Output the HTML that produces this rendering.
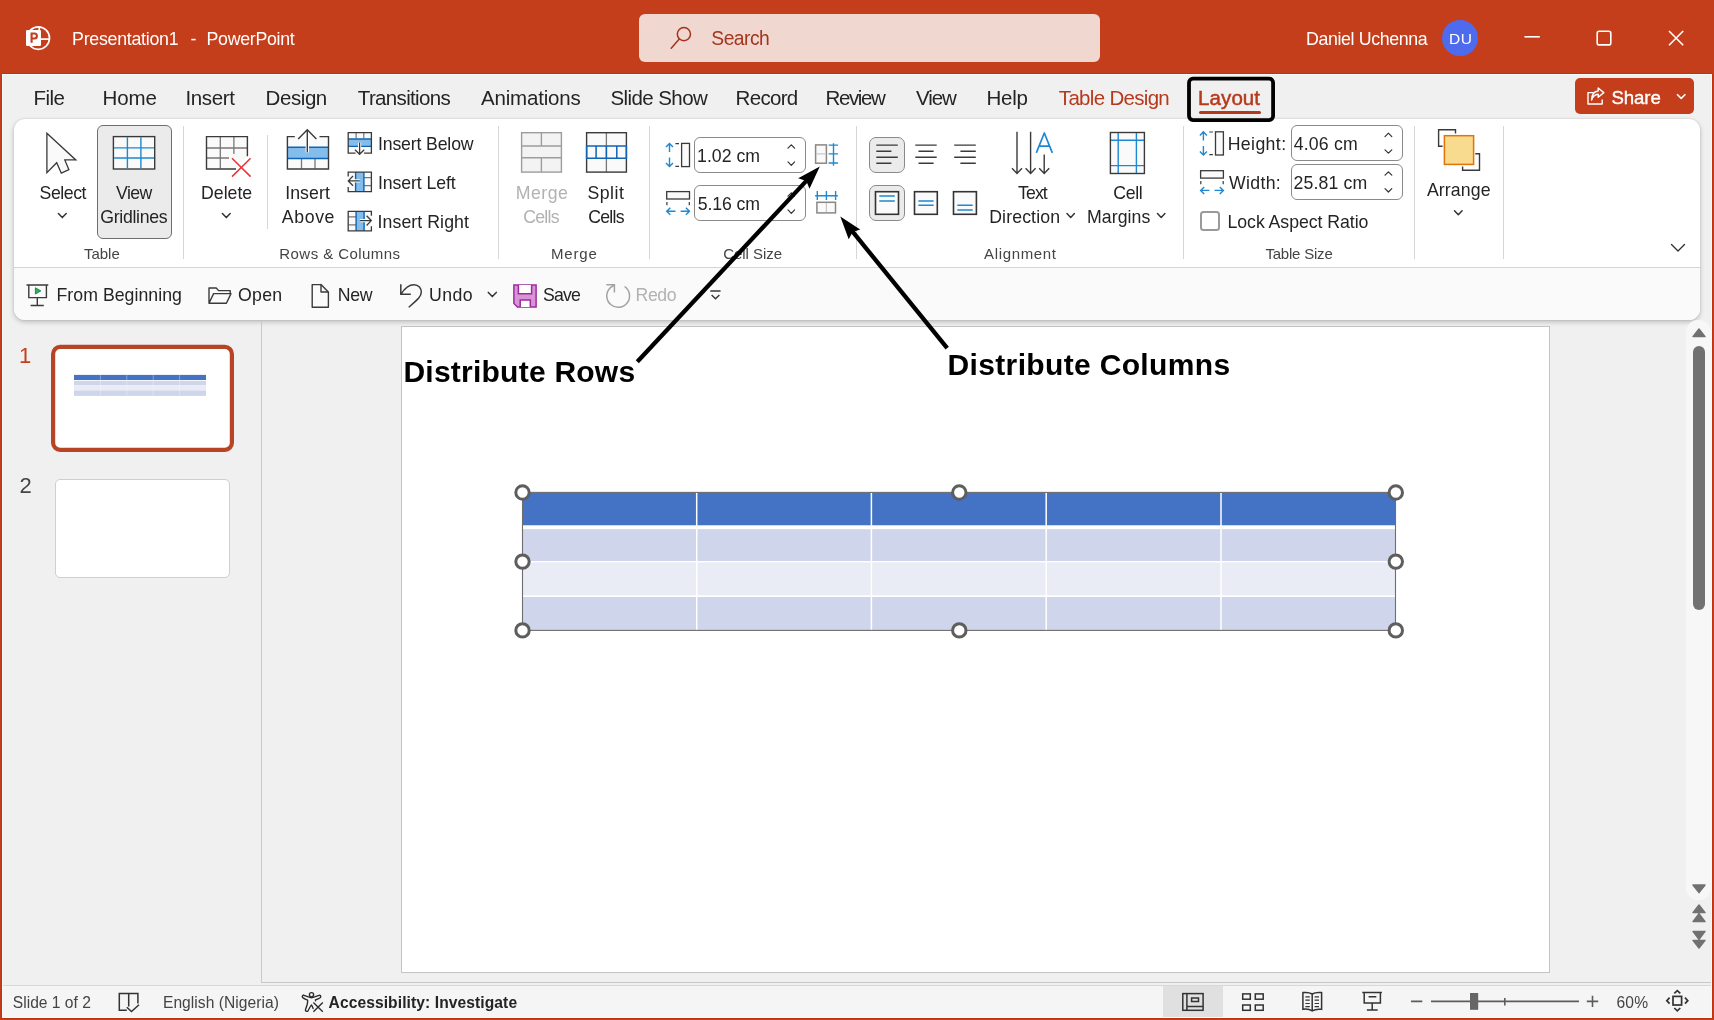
<!DOCTYPE html>
<html><head><meta charset="utf-8"><title>PowerPoint</title>
<style>
html,body{margin:0;padding:0;}
body{width:1714px;height:1020px;position:relative;overflow:hidden;background:#F0F0F0;font-family:"Liberation Sans",sans-serif;}
.a{position:absolute;}
.t{position:absolute;white-space:pre;line-height:1;font-family:"Liberation Sans",sans-serif;}
#titlebar{left:0;top:0;width:1714px;height:74px;background:#C43E1C;}
#bl{left:0;top:0;width:2px;height:1020px;background:#C43E1C;}
#br{left:1712px;top:0;width:2px;height:1020px;background:#C43E1C;}
#bb{left:0;top:1018px;width:1714px;height:2px;background:#C43E1C;}
.halo{position:absolute;background:#F8FEFE;}
.dk{position:absolute;background:#C0320F;}
#search{left:639px;top:14px;width:461px;height:48px;background:#F0D8D1;border-radius:6px;}
#avatar{left:1442px;top:20px;width:36px;height:36px;border-radius:50%;background:#4F6BED;}
#ribbon{left:14px;top:119px;width:1686px;height:201px;background:#fff;border-radius:11px;box-shadow:0 2px 5px rgba(0,0,0,0.22),0 0 2px rgba(0,0,0,0.12);overflow:hidden;}
#qat{left:0;top:148px;width:1686px;height:53px;background:#FAFAFA;border-top:1px solid #d4d4d4;}
.sep{position:absolute;width:1px;background:#d6d6d6;}
#layoutbox{left:1187px;top:76.8px;width:80.4px;height:37.6px;border:3.8px solid #000;border-radius:6px;}
#layoutul{left:1199px;top:111px;width:62px;height:3px;background:#B7391B;border-radius:1.5px;}
#share{left:1575px;top:78px;width:118.5px;height:36px;background:#C43E1C;border-radius:5px;}
#vg{left:97px;top:125px;width:73px;height:112px;background:#EBEBEB;border:1px solid #6e6e6e;border-radius:6px;}
.spin{position:absolute;background:#fff;border:1px solid #8a8a8a;border-radius:6px;box-sizing:border-box;}
.abtn{position:absolute;background:#EBEBEB;border:1px solid #8a8a8a;border-radius:7px;box-sizing:border-box;}
#chk{left:1200px;top:211px;width:20px;height:20px;box-sizing:border-box;border:2px solid #9a9a9a;border-radius:3.5px;background:#fff;}
#pdiv{left:261px;top:321px;width:1px;height:662px;background:#c8c8c8;}
#th1{left:51.5px;top:345.5px;width:176px;height:99px;border:3.5px solid #C0432A;border-radius:9px;background:#fff;}
#th2{left:55px;top:479px;width:172.5px;height:97px;border:1px solid #cfcfcf;border-radius:5px;background:#fff;}
#slide{left:401px;top:326px;width:1147px;height:645px;background:#fff;border:1px solid #c4c4c4;box-sizing:content-box;}
#hl1{left:262px;top:982px;width:1449px;height:1px;background:#c8c8c8;}
#hl2{left:2px;top:985px;width:1709px;height:1px;background:#d8d8d8;}
#status{left:2px;top:986px;width:1709px;height:31px;background:#F5F5F5;}
#nvbtn{left:1163px;top:986px;width:60px;height:31px;background:#E0E0E0;}
#strack{left:1686px;top:320px;width:25px;height:580px;background:#F7F7F7;border-radius:12px;}
#sthumb{left:1693px;top:346px;width:12px;height:264px;background:#717171;border-radius:6px;}
</style></head><body>
<div class="a" id="titlebar"></div>
<div class="a" id="search"></div>
<div class="a" id="avatar"></div>
<div class="a" id="layoutul"></div>
<div class="a" id="share"></div>
<div class="a" id="ribbon"><div class="a" id="qat"></div></div>
<div class="sep" style="left:183px;top:126px;height:133px"></div>
<div class="sep" style="left:267px;top:135px;height:94px"></div>
<div class="sep" style="left:498px;top:126px;height:133px"></div>
<div class="sep" style="left:649px;top:126px;height:133px"></div>
<div class="sep" style="left:856px;top:126px;height:133px"></div>
<div class="sep" style="left:1183px;top:126px;height:133px"></div>
<div class="sep" style="left:1414px;top:126px;height:133px"></div>
<div class="sep" style="left:1503px;top:126px;height:133px"></div>
<div class="a" id="vg"></div>
<div class="spin" style="left:694px;top:137px;width:112px;height:36px"></div>
<div class="spin" style="left:694px;top:185px;width:112px;height:36px"></div>
<div class="spin" style="left:1291px;top:125px;width:112px;height:36px"></div>
<div class="spin" style="left:1291px;top:164px;width:112px;height:36px"></div>
<div class="abtn" style="left:869px;top:137px;width:36px;height:36px"></div>
<div class="abtn" style="left:869px;top:185px;width:36px;height:36px"></div>
<div class="a" id="chk"></div>
<div class="a" id="pdiv"></div>
<div class="a" id="th2"></div>
<div class="a" id="slide"></div>
<div class="a" id="strack"></div>
<div class="a" id="sthumb"></div>
<div class="a" id="hl1"></div>
<div class="a" id="hl2"></div>
<div class="a" id="status"></div>
<div class="a" id="nvbtn"></div>
<div class="halo" style="left:2px;top:74px;width:1px;height:944px"></div>
<div class="halo" style="left:1711px;top:74px;width:1px;height:944px"></div>
<div class="halo" style="left:2px;top:74px;width:1710px;height:1px"></div>
<div class="halo" style="left:2px;top:1017px;width:1710px;height:1px"></div>
<div class="a" id="bl"></div>
<div class="a" id="br"></div>
<div class="a" id="bb"></div>
<div class="dk" style="left:1px;top:74px;width:1px;height:944px"></div>
<div class="dk" style="left:1712px;top:74px;width:1px;height:944px"></div>
<div class="dk" style="left:2px;top:73px;width:1710px;height:1px"></div>
<div class="dk" style="left:2px;top:1018px;width:1710px;height:1px"></div>
<svg class="a" style="left:0;top:0" width="1714" height="1020" viewBox="0 0 1714 1020" fill="none">
<!-- slide table -->
<g>
<rect x="522.5" y="492.7" width="873" height="33" fill="#4472C4"/>
<rect x="522.5" y="525.4" width="873" height="4" fill="#fff"/>
<rect x="522.5" y="529.2" width="873" height="32" fill="#CFD5EA"/>
<rect x="522.5" y="561" width="873" height="1.5" fill="#fff"/>
<rect x="522.5" y="562.4" width="873" height="33.2" fill="#E9EBF5"/>
<rect x="522.5" y="595.5" width="873" height="1.5" fill="#fff"/>
<rect x="522.5" y="597" width="873" height="33.3" fill="#CFD5EA"/>
<path d="M696.7 493 V630 M871.4 493 V630 M1046.2 493 V630 M1221 493 V630" stroke="#fff" stroke-width="1.5"/>
<rect x="522.5" y="492.4" width="873" height="138" stroke="#6e6e6e" stroke-width="1.1"/>
<g fill="#fff" stroke="#5e5e5e" stroke-width="3">
<circle cx="522.5" cy="492.5" r="6.7"/><circle cx="959.3" cy="492.5" r="6.7"/><circle cx="1395.8" cy="492.5" r="6.7"/>
<circle cx="522.5" cy="561.6" r="6.7"/><circle cx="1395.8" cy="561.6" r="6.7"/>
<circle cx="522.5" cy="630.4" r="6.7"/><circle cx="959.3" cy="630.4" r="6.7"/><circle cx="1395.8" cy="630.4" r="6.7"/>
</g>
</g>
<!-- thumbnail -->
<rect x="53.1" y="346.9" width="178.8" height="102.9" rx="7" fill="#fff" stroke="#B84426" stroke-width="4.2"/>
<!-- thumbnail table -->
<g>
<rect x="74" y="374.9" width="132" height="5.1" fill="#4472C4"/>
<rect x="74" y="380.8" width="132" height="4.4" fill="#CFD5EA"/>
<rect x="74" y="385.2" width="132" height="5.2" fill="#E9EBF5"/>
<rect x="74" y="390.4" width="132" height="5.5" fill="#CFD5EA"/>
<path d="M100.4 374.9 V395.9 M126.8 374.9 V395.9 M153.2 374.9 V395.9 M179.6 374.9 V395.9" stroke="#fff" stroke-width="0.5" opacity="0.7"/>
</g>
<!-- PowerPoint logo -->
<g stroke="#fff" stroke-width="1.7">
<circle cx="38.3" cy="38.1" r="11.2"/>
<line x1="39.2" y1="27" x2="39.2" y2="31"/>
<line x1="40" y1="39.1" x2="49.5" y2="39.1"/>
</g>
<rect x="26" y="30" width="15" height="16" rx="1.2" fill="#fff"/>
<path d="M31.6 42.7 V33.5 H34.4 a2.5 2.5 0 0 1 0 5 H31.6" stroke="#C43E1C" stroke-width="2.1"/>
<!-- search icon -->
<g stroke="#A3331C" stroke-width="1.5" stroke-linecap="round">
<circle cx="683.9" cy="34.1" r="6.6"/>
<line x1="679.3" y1="39" x2="671.2" y2="48.2"/>
</g>
<!-- window controls -->
<g stroke="#fff" stroke-width="1.6">
<line x1="1524.4" y1="36.8" x2="1539.8" y2="36.8"/>
<rect x="1597.2" y="31.3" width="13.6" height="13.6" rx="2"/>
<path d="M1669 31 L1683.2 45.2 M1683.2 31 L1669 45.2"/>
</g>
<!-- share icon + chevron -->
<g stroke="#fff" stroke-width="1.4" stroke-linejoin="round">
<path d="M1593.5 92.6 H1588 V104 H1602.2 V99.6"/>
<path d="M1591.6 100 C1591.8 94.5 1594.5 91.2 1598.2 91 V88 L1603.8 92.6 L1598.2 97.2 V94.2 C1595 94.3 1592.8 96 1591.6 100 Z"/>
<path d="M1677 94.3 L1681.2 98.4 L1685.4 94.3" stroke-width="1.6"/>
</g>
<!-- Select cursor -->
<path d="M46.9 133.3 V172.6 L56.7 162.7 L61.3 173.2 L68.9 169.7 L64.8 159.9 H75.8 Z" fill="#fafafa" stroke="#3a3a3a" stroke-width="1.3" stroke-linejoin="miter"/>
<!-- chevrons -->
<g stroke="#333" stroke-width="1.5" stroke-linecap="round" stroke-linejoin="round">
<path d="M58.4 213.6 L62.3 217.6 L66.2 213.6"/>
<path d="M222.4 213.6 L226.3 217.6 L230.2 213.6"/>
<path d="M1067 213.6 L1070.7 217.5 L1074.4 213.6"/>
<path d="M1157.5 213.6 L1161.2 217.5 L1164.9 213.6"/>
<path d="M1454.5 210.8 L1458.3 214.8 L1462.1 210.8"/>
<path d="M488.3 292.4 L492.3 296.6 L496.3 292.4"/>
<path d="M1671.5 244.5 L1678 251 L1684.5 244.5" stroke-width="1.4"/>
</g>
<!-- spinner chevrons -->
<g stroke="#333" stroke-width="1.2" stroke-linecap="round" stroke-linejoin="round">
<path d="M788 148.2 L791.3 144.8 L794.6 148.2"/>
<path d="M788 161.9 L791.3 165.3 L794.6 161.9"/>
<path d="M788 196.2 L791.3 192.8 L794.6 196.2"/>
<path d="M788 209.9 L791.3 213.3 L794.6 209.9"/>
<path d="M1385 136.6 L1388.4 133.2 L1391.8 136.6"/>
<path d="M1385 149.8 L1388.4 153.2 L1391.8 149.8"/>
<path d="M1385 175.2 L1388.4 171.8 L1391.8 175.2"/>
<path d="M1385 188.6 L1388.4 192 L1391.8 188.6"/>
</g>
<!-- View Gridlines icon -->
<rect x="113.4" y="136.6" width="41.3" height="32.4" fill="#fafafa" stroke="#3a3a3a" stroke-width="1.4"/>
<path d="M127.4 137.3 V168.3 M140.9 137.3 V168.3 M114.1 147.9 H154 M114.1 158 H154" stroke="#1E88D2" stroke-width="1.4"/>
<!-- Delete icon -->
<path d="M206.5 136.6 H247.4 V156 L236 169 H206.5 Z" fill="#fafafa"/>
<path d="M220.3 137 V168.6 M233.9 137 V154 M207 148 H247 M207 158 H229" stroke="#797775" stroke-width="1.3"/>
<path d="M247.4 156.2 V136.6 H206.5 V169 H236" stroke="#3a3a3a" stroke-width="1.4"/>
<path d="M232 158.2 L250.6 176.6 M250.6 158.2 L232 176.6" stroke="#E8353B" stroke-width="1.5"/>
<!-- Insert Above icon -->
<rect x="287.4" y="136.6" width="41.1" height="32.4" fill="#fafafa"/>
<rect x="287.4" y="147.2" width="41.1" height="11.4" fill="#83BDEB"/>
<path d="M301.5 159 V168.6 M315 159 V168.6" stroke="#797775" stroke-width="1.3"/>
<path d="M287.4 147.3 H328.5 M287.4 158.6 H328.5" stroke="#0F64B4" stroke-width="1.5"/>
<path d="M294.8 136.6 H287.4 V169 H328.5 V136.6 H319.5" stroke="#3a3a3a" stroke-width="1.4"/>
<path d="M307.3 152.4 V130" stroke="#fff" stroke-width="3.4"/>
<path d="M307.3 152.2 V129.9 M298.2 139 L307.3 129.8 L316.4 139" stroke="#3a3a3a" stroke-width="1.4"/>
<!-- Insert Below small -->
<rect x="348.2" y="132.7" width="23.2" height="20.4" fill="#fafafa"/>
<rect x="348.2" y="139" width="23.2" height="7.4" fill="#83BDEB"/>
<path d="M356.1 133 V138.6 M363.8 133 V138.6" stroke="#797775" stroke-width="1.2"/>
<path d="M348.2 139 H371.4 M348.2 146.4 H371.4" stroke="#0F64B4" stroke-width="1.4"/>
<path d="M355.5 153.1 H348.2 V132.7 H371.4 V153.1 H364" stroke="#3a3a3a" stroke-width="1.3"/>
<path d="M359.6 142.5 V154" stroke="#fff" stroke-width="3.2"/>
<path d="M359.6 142.6 V154.2 M355 149.8 L359.6 154.3 L364.2 149.8" stroke="#3a3a3a" stroke-width="1.3"/>
<!-- Insert Left small -->
<rect x="348.2" y="172.1" width="23.2" height="19.6" fill="#fafafa"/>
<rect x="355.6" y="172.1" width="8.3" height="19.6" fill="#83BDEB"/>
<path d="M364 177.6 H371 M364 185.6 H371" stroke="#797775" stroke-width="1.2"/>
<path d="M355.6 172.1 V191.7 M363.9 172.1 V191.7" stroke="#0F64B4" stroke-width="1.4"/>
<path d="M348.2 176.6 V172.1 H371.4 V191.7 H348.2 V187" stroke="#3a3a3a" stroke-width="1.3"/>
<path d="M348.6 180.9 H359.8" stroke="#fff" stroke-width="3.2"/>
<path d="M348.4 180.9 H359.8 M353 176 L348.3 180.9 L353 185.8" stroke="#3a3a3a" stroke-width="1.3"/>
<!-- Insert Right small -->
<rect x="348.2" y="211.3" width="23.2" height="19.6" fill="#fafafa"/>
<rect x="356.1" y="211.3" width="8" height="19.6" fill="#83BDEB"/>
<path d="M348.6 216.8 H356 M348.6 224.8 H356" stroke="#797775" stroke-width="1.2"/>
<path d="M356.1 211.3 V230.9 M364.1 211.3 V230.9" stroke="#0F64B4" stroke-width="1.4"/>
<path d="M371.4 215.8 V211.3 H348.2 V230.9 H371.4 V226.3" stroke="#3a3a3a" stroke-width="1.3"/>
<path d="M359.8 220.6 H371" stroke="#fff" stroke-width="3.2"/>
<path d="M359.8 220.6 H371.2 M366.6 215.7 L371.3 220.6 L366.6 225.5" stroke="#3a3a3a" stroke-width="1.3"/>
<!-- Merge cells (disabled) -->
<rect x="521.6" y="132.7" width="39.8" height="39.4" fill="#f3f3f3" stroke="#9d9d9d" stroke-width="1.4"/>
<path d="M521.6 146 H561.4 M521.6 157.8 H561.4 M541.4 132.7 V146 M541.4 157.8 V172.1" stroke="#9d9d9d" stroke-width="1.4"/>
<!-- Split cells -->
<rect x="586.6" y="132.7" width="39.8" height="39.4" fill="#fafafa"/>
<path d="M606.4 133 V172" stroke="#797775" stroke-width="1.3"/>
<rect x="586.6" y="132.7" width="39.8" height="39.4" stroke="#3a3a3a" stroke-width="1.4"/>
<path d="M586.6 146.1 H626.4 V158.2 H586.6 Z M596.1 146.1 V158.2 M606.4 146.1 V158.2 M616.8 146.1 V158.2" stroke="#0F64B4" stroke-width="1.5"/>
<!-- Cell height icon -->
<g>
<rect x="681.6" y="143.4" width="7.9" height="23.2" fill="#fafafa" stroke="#3a3a3a" stroke-width="1.3"/>
<path d="M675.4 143.6 H679 M675.4 166.3 H679" stroke="#3a3a3a" stroke-width="1.2"/>
<path d="M669.5 143.6 V152 M669.5 157.6 V166.4 M666 147 L669.5 143.4 L673 147 M666 163 L669.5 166.6 L673 163" stroke="#1E88D2" stroke-width="1.4"/>
</g>
<!-- Cell width icon -->
<g>
<rect x="666.7" y="191.6" width="22.8" height="7.4" fill="#fafafa" stroke="#3a3a3a" stroke-width="1.3"/>
<path d="M666.9 202 V205.2 M689.3 202 V205.2" stroke="#3a3a3a" stroke-width="1.2"/>
<path d="M666.8 211.3 H675.5 M680.6 211.3 H689.4 M670.3 207.8 L666.7 211.3 L670.3 214.8 M685.9 207.8 L689.5 211.3 L685.9 214.8" stroke="#1E88D2" stroke-width="1.4"/>
</g>
<g transform="translate(533.9,-11.6)">
<rect x="681.6" y="143.4" width="7.9" height="23.2" fill="#fafafa" stroke="#3a3a3a" stroke-width="1.3"/>
<path d="M675.4 143.6 H679 M675.4 166.3 H679" stroke="#3a3a3a" stroke-width="1.2"/>
<path d="M669.5 143.6 V152 M669.5 157.6 V166.4 M666 147 L669.5 143.4 L673 147 M666 163 L669.5 166.6 L673 163" stroke="#1E88D2" stroke-width="1.4"/>
</g>
<g transform="translate(533.9,-20.9)">
<rect x="666.7" y="191.6" width="22.8" height="7.4" fill="#fafafa" stroke="#3a3a3a" stroke-width="1.3"/>
<path d="M666.9 202 V205.2 M689.3 202 V205.2" stroke="#3a3a3a" stroke-width="1.2"/>
<path d="M666.8 211.3 H675.5 M680.6 211.3 H689.4 M670.3 207.8 L666.7 211.3 L670.3 214.8 M685.9 207.8 L689.5 211.3 L685.9 214.8" stroke="#1E88D2" stroke-width="1.4"/>
</g>
<!-- Distribute rows -->
<rect x="815.6" y="144.9" width="10.8" height="18.3" fill="#fafafa" stroke="#8a8886" stroke-width="1.5"/>
<path d="M816.4 153.9 H825.6" stroke="#c8c6c4" stroke-width="1.2"/>
<path d="M833.5 143.3 V165.8 M828.6 145.1 H838 M828.6 153.9 H838 M828.6 163 H838" stroke="#1E88D2" stroke-width="1.4"/>
<!-- Distribute cols -->
<rect x="816.9" y="202.3" width="18.6" height="10.6" fill="#fafafa" stroke="#8a8886" stroke-width="1.5"/>
<path d="M826.4 203 V212.2" stroke="#c8c6c4" stroke-width="1.2"/>
<path d="M815.1 195.7 H837.8 M817.3 191 V200 M826.4 191 V200 M835.6 191 V200" stroke="#1E88D2" stroke-width="1.4"/>
<!-- Align icons -->
<g stroke="#3a3a3a" stroke-width="1.4">
<path d="M876.3 145.1 H897.8 M876.3 151.2 H891.4 M876.3 157.2 H897.8 M876.3 163.3 H891.4"/>
<path d="M915.3 145.1 H936.7 M918.5 151.2 H933.6 M915.3 157.2 H936.7 M918.5 163.3 H933.6"/>
<path d="M954.2 145.1 H975.8 M960.4 151.2 H975.8 M954.2 157.2 H975.8 M960.4 163.3 H975.8"/>
</g>
<g stroke="#333" stroke-width="1.6" fill="#fafafa">
<rect x="875.5" y="191.7" width="23" height="22.6"/>
<rect x="914.5" y="191.7" width="22.8" height="22.6"/>
<rect x="953.5" y="191.7" width="22.9" height="22.6"/>
</g>
<path d="M879.3 196 H894.8 M879.3 201 H894.8 M918.4 201 H933.6 M918.4 205.3 H933.6 M957.3 205.2 H972.7 M957.3 209.9 H972.7" stroke="#1E88D2" stroke-width="1.5"/>
<!-- Text direction -->
<g stroke="#3a3a3a" stroke-width="1.4">
<path d="M1017 131.8 V173.3 M1012 168.3 L1017 173.4 L1022 168.3"/>
<path d="M1030.6 131.8 V173.3 M1025.6 168.3 L1030.6 173.4 L1035.6 168.3"/>
<path d="M1044.2 154.4 V173.3 M1039.2 168.3 L1044.2 173.4 L1049.2 168.3"/>
</g>
<path d="M1036.3 152.9 L1044.3 133 L1052.3 152.9 M1039 146.2 H1049.6" stroke="#1E88D2" stroke-width="1.7" stroke-linejoin="round"/>
<!-- Cell margins -->
<rect x="1110.4" y="132.5" width="34" height="41" fill="#fafafa"/>
<path d="M1118.2 133 V173 M1136.4 133 V173 M1111 140.2 H1144 M1111 165.6 H1144" stroke="#1E88D2" stroke-width="1.4"/>
<rect x="1110.4" y="132.5" width="34" height="41" stroke="#3a3a3a" stroke-width="1.4"/>
<!-- Arrange -->
<path d="M1455.5 133.4 V129.8 H1438.6 V146.2 H1442.6" stroke="#3a3a3a" stroke-width="1.4"/>
<path d="M1475.3 153.8 H1479.5 V170.2 H1462.6 V166.5" stroke="#3a3a3a" stroke-width="1.4"/>
<rect x="1444.4" y="135.7" width="29.2" height="28.7" fill="#F8DB8F" stroke="#E0730A" stroke-width="1.5"/>
<!-- QAT icons -->
<g stroke="#3a3a3a" stroke-width="1.4">
<path d="M26.5 285 H48.3 M28.8 285 V297.6 H46.4 V285 M37.3 297.6 V305.5 M30.6 305.5 H43.8"/>
<path d="M230.2 293.6 V290.6 H218.6 L216.2 288 H209 V303.2 L213.6 293.6 H231 L226.4 303.2 H209" stroke-linejoin="round"/>
<path d="M321 284.6 H312.2 V307.2 H328.4 V292 L321 284.6 V292 H328.4" stroke-linejoin="round"/>
<path d="M400.8 284.2 V294.2 H410.8 M400.9 294.1 C404.5 288.5 409 284.7 414 284.7 C418.8 284.7 421.3 288.4 421.3 292 C421.3 296.3 418.5 298.7 408.7 307.3" stroke-width="1.5"/>
<path d="M710.3 291 H720.6 M711.6 295 L715.5 298.7 L719.4 295" stroke-width="1.5"/>
</g>
<path d="M35.4 287.8 L40.8 290.9 L35.4 294 Z" fill="#3BAA64" stroke="#1C8E44" stroke-width="1" stroke-linejoin="round"/>
<!-- save -->
<path d="M513.9 284.9 H536.1 V307 H517.4 L513.9 303.5 Z" fill="#D993D9" stroke="#9B2D9B" stroke-width="1.5"/>
<path d="M518.4 284.9 V293.7 H531.6 V284.9 M520.2 307 V300 H530.3 V307" fill="#fff" stroke="#9B2D9B" stroke-width="1.5"/>
<!-- redo -->
<path d="M606.3 284.7 H614.4 V292.5 M624.6 286.5 A11.4 11.4 0 1 1 609.6 288.4 L614.2 284.9" stroke="#a3a3a3" stroke-width="1.5"/>
<!-- scrollbar arrows -->
<g fill="#717171" stroke="#717171" stroke-width="1.5" stroke-linejoin="round">
<path d="M1699 329 L1705 336.6 H1693 Z"/>
<path d="M1699 892.6 L1705 885 H1693 Z"/>
<path d="M1699 905 L1705 912.6 H1693 Z M1699 913.6 L1705 921.6 H1693 Z"/>
<path d="M1699 948 L1705 940.4 H1693 Z M1699 939.4 L1705 931.4 H1693 Z"/>
</g>
<!-- status icons -->
<g stroke="#333" stroke-width="1.5">
<path d="M128.7 1006.5 V993.6 M126.8 1010.2 H119.3 V993.6 H137.9 V1003.6 M126.8 1007.2 L131.5 1011.6 L139 1004.8"/>
<rect x="1182.8" y="993.6" width="20.3" height="16.7"/>
<path d="M1186.9 993.6 V1010.3 M1186.9 1006.4 H1203"/>
<rect x="1191.6" y="998" width="6.9" height="3.5"/>
<rect x="1242.7" y="993.9" width="7.6" height="5.3"/><rect x="1255.3" y="993.9" width="7.9" height="5.3"/>
<rect x="1242.7" y="1005" width="7.6" height="5.3"/><rect x="1255.3" y="1005" width="7.9" height="5.3"/>
<path d="M1312.2 994 V1010.8 M1312.2 994 C1309.5 992.4 1306 992.2 1302.9 992.6 V1009.3 C1306 1008.9 1309.5 1009.2 1312.2 1010.8 C1314.9 1009.2 1318.4 1008.9 1321.6 1009.3 V992.6 C1318.4 992.2 1314.9 992.4 1312.2 994"/>
<path d="M1305.4 996.9 H1309.8 M1305.4 1000.2 H1309.8 M1305.4 1003.5 H1309.8 M1305.4 1006.6 H1309.8 M1314.6 996.9 H1319 M1314.6 1000.2 H1319 M1314.6 1003.5 H1319 M1314.6 1006.6 H1319" stroke-width="1.2"/>
<path d="M1362.3 992.5 H1381.9 M1364.2 992.5 V1002.9 H1380.4 V992.5 M1368.6 996.7 H1376.3 M1372.2 1002.9 V1009.9 M1366.9 1009.9 H1377.7"/>
</g>
<!-- accessibility -->
<g stroke="#2b2b2b" stroke-width="1.35" stroke-linecap="round" stroke-linejoin="round">
<circle cx="311.5" cy="994.7" r="2.1"/>
<path d="M303.9 995.3 C302.6 994.9 301.8 996.3 302.5 997.3 C303 998.1 305 998.9 307.6 1000 C308 1003 306.5 1007 305.5 1009.4 C305 1011 306.6 1012 307.9 1011 C309 1009.5 310 1006.5 311.5 1004.9 C312.3 1005.8 312.7 1007.2 313.1 1008.5"/>
<path d="M303.9 995.3 C306 996.1 309 997.7 311.5 997.7 C314 997.7 317 996.1 319.1 995.3 C320.4 994.9 321.2 996.3 320.5 997.3 C320 998.1 318 998.9 315.4 999.9 L315.6 1000.8"/>
<path d="M313.4 1002.4 L322.8 1011.8 M322.8 1002.4 L313.4 1011.8" stroke-linecap="butt"/>
</g>
<!-- zoom controls -->
<g stroke="#5c5c5c" stroke-width="1.6">
<path d="M1411 1001.4 H1422.3 M1431 1001.4 H1579 M1504.8 998 V1005.6 M1586.8 1001.4 H1598.2 M1592.5 995.7 V1007.1"/>
</g>
<rect x="1470" y="993" width="8.2" height="16.8" fill="#666"/>
<g stroke="#333" stroke-width="1.7">
<rect x="1673" y="996.4" width="8.6" height="8.6"/>
<path d="M1674.3 993.4 L1677.3 990.6 L1680.3 993.4 M1674.3 1008 L1677.3 1010.8 L1680.3 1008 M1669.6 997.7 L1666.8 1000.7 L1669.6 1003.7 M1685 997.7 L1687.8 1000.7 L1685 1003.7"/>
</g>
</svg>
<div class="a" id="txt" style="left:0;top:0;width:1714px;height:1020px;will-change:transform;">
<span class="t" style="left:72.06px;top:31px;font-size:17.8px;color:#fff;font-weight:400;letter-spacing:-0.266px;">Presentation1</span>
<span class="t" style="left:190.44px;top:31px;font-size:17.8px;color:#fff;font-weight:400;letter-spacing:0.000px;">-</span>
<span class="t" style="left:206.51px;top:31px;font-size:17.8px;color:#fff;font-weight:400;letter-spacing:-0.302px;">PowerPoint</span>
<span class="t" style="left:711.30px;top:29px;font-size:19.3px;color:#A3361F;font-weight:400;letter-spacing:-0.517px;">Search</span>
<span class="t" style="left:1306.06px;top:31px;font-size:17.8px;color:#fff;font-weight:400;letter-spacing:-0.380px;">Daniel Uchenna</span>
<span class="t" style="left:1448.89px;top:31px;font-size:15.5px;color:#fff;font-weight:400;letter-spacing:0.765px;">DU</span>
<span class="t" style="left:33.50px;top:88px;font-size:20.5px;color:#242424;font-weight:400;letter-spacing:-0.527px;">File</span>
<span class="t" style="left:102.50px;top:88px;font-size:20.5px;color:#242424;font-weight:400;letter-spacing:-0.077px;">Home</span>
<span class="t" style="left:185.50px;top:88px;font-size:20.5px;color:#242424;font-weight:400;letter-spacing:-0.364px;">Insert</span>
<span class="t" style="left:265.50px;top:88px;font-size:20.5px;color:#242424;font-weight:400;letter-spacing:-0.408px;">Design</span>
<span class="t" style="left:357.78px;top:88px;font-size:20.5px;color:#242424;font-weight:400;letter-spacing:-0.652px;">Transitions</span>
<span class="t" style="left:481.10px;top:88px;font-size:20.5px;color:#242424;font-weight:400;letter-spacing:-0.205px;">Animations</span>
<span class="t" style="left:610.46px;top:88px;font-size:20.5px;color:#242424;font-weight:400;letter-spacing:-0.583px;">Slide Show</span>
<span class="t" style="left:735.50px;top:88px;font-size:20.5px;color:#242424;font-weight:400;letter-spacing:-0.662px;">Record</span>
<span class="t" style="left:825.50px;top:88px;font-size:20.5px;color:#242424;font-weight:400;letter-spacing:-1.369px;">Review</span>
<span class="t" style="left:916.10px;top:88px;font-size:20.5px;color:#242424;font-weight:400;letter-spacing:-1.131px;">View</span>
<span class="t" style="left:986.50px;top:88px;font-size:20.5px;color:#242424;font-weight:400;letter-spacing:-0.236px;">Help</span>
<span class="t" style="left:1058.83px;top:88px;font-size:20.5px;color:#B7391B;font-weight:400;letter-spacing:-0.688px;">Table Design</span>
<span class="t" style="left:1198.05px;top:88px;font-size:20.5px;color:#B7391B;font-weight:400;letter-spacing:0.092px;-webkit-text-stroke:0.5px #B7391B;">Layout</span>
<span class="t" style="left:1611.42px;top:89px;font-size:18.6px;color:#fff;font-weight:400;letter-spacing:-0.075px;-webkit-text-stroke:0.4px #fff;">Share</span>
<span class="t" style="left:39.60px;top:185px;font-size:17.7px;color:#242424;font-weight:400;letter-spacing:-0.464px;">Select</span>
<span class="t" style="left:116.05px;top:185px;font-size:17.7px;color:#242424;font-weight:400;letter-spacing:-0.600px;">View</span>
<span class="t" style="left:100.27px;top:209px;font-size:17.7px;color:#242424;font-weight:400;letter-spacing:-0.305px;">Gridlines</span>
<span class="t" style="left:201.12px;top:185px;font-size:17.7px;color:#242424;font-weight:400;letter-spacing:-0.013px;">Delete</span>
<span class="t" style="left:285.17px;top:185px;font-size:17.7px;color:#242424;font-weight:400;letter-spacing:0.103px;">Insert</span>
<span class="t" style="left:281.80px;top:209px;font-size:17.7px;color:#242424;font-weight:400;letter-spacing:0.622px;">Above</span>
<span class="t" style="left:377.97px;top:136px;font-size:17.7px;color:#242424;font-weight:400;letter-spacing:-0.155px;">Insert Below</span>
<span class="t" style="left:377.97px;top:175px;font-size:17.7px;color:#242424;font-weight:400;letter-spacing:-0.087px;">Insert Left</span>
<span class="t" style="left:377.62px;top:214px;font-size:17.7px;color:#242424;font-weight:400;letter-spacing:0.074px;">Insert Right</span>
<span class="t" style="left:515.72px;top:185px;font-size:17.7px;color:#b2b2b2;font-weight:400;letter-spacing:0.487px;">Merge</span>
<span class="t" style="left:523.17px;top:209px;font-size:17.7px;color:#b2b2b2;font-weight:400;letter-spacing:-0.740px;">Cells</span>
<span class="t" style="left:587.45px;top:185px;font-size:17.7px;color:#242424;font-weight:400;letter-spacing:0.490px;">Split</span>
<span class="t" style="left:588.17px;top:209px;font-size:17.7px;color:#242424;font-weight:400;letter-spacing:-0.740px;">Cells</span>
<span class="t" style="left:697.09px;top:148px;font-size:17.7px;color:#242424;font-weight:400;letter-spacing:0.000px;">1.02 cm</span>
<span class="t" style="left:697.65px;top:196px;font-size:17.7px;color:#242424;font-weight:400;letter-spacing:-0.092px;">5.16 cm</span>
<span class="t" style="left:1018.07px;top:185px;font-size:17.7px;color:#242424;font-weight:400;letter-spacing:-0.908px;">Text</span>
<span class="t" style="left:989.17px;top:209px;font-size:17.7px;color:#242424;font-weight:400;letter-spacing:0.137px;">Direction</span>
<span class="t" style="left:1113.22px;top:185px;font-size:17.7px;color:#242424;font-weight:400;letter-spacing:-0.345px;">Cell</span>
<span class="t" style="left:1086.97px;top:209px;font-size:17.7px;color:#242424;font-weight:400;letter-spacing:0.084px;">Margins</span>
<span class="t" style="left:1227.67px;top:136px;font-size:17.7px;color:#242424;font-weight:400;letter-spacing:0.393px;">Height:</span>
<span class="t" style="left:1229.10px;top:175px;font-size:17.7px;color:#242424;font-weight:400;letter-spacing:0.291px;">Width:</span>
<span class="t" style="left:1293.72px;top:136px;font-size:17.7px;color:#242424;font-weight:400;letter-spacing:0.189px;">4.06 cm</span>
<span class="t" style="left:1293.57px;top:175px;font-size:17.7px;color:#242424;font-weight:400;letter-spacing:0.132px;">25.81 cm</span>
<span class="t" style="left:1227.52px;top:214px;font-size:17.7px;color:#242424;font-weight:400;letter-spacing:-0.042px;">Lock Aspect Ratio</span>
<span class="t" style="left:1426.90px;top:182px;font-size:17.7px;color:#242424;font-weight:400;letter-spacing:0.121px;">Arrange</span>
<span class="t" style="left:83.97px;top:246px;font-size:15px;color:#444444;font-weight:400;letter-spacing:-0.019px;">Table</span>
<span class="t" style="left:279.33px;top:246px;font-size:15px;color:#444444;font-weight:400;letter-spacing:0.431px;">Rows &amp; Columns</span>
<span class="t" style="left:550.93px;top:246px;font-size:15px;color:#444444;font-weight:400;letter-spacing:0.821px;">Merge</span>
<span class="t" style="left:723.15px;top:246px;font-size:15px;color:#444444;font-weight:400;letter-spacing:-0.044px;">Cell Size</span>
<span class="t" style="left:984.00px;top:246px;font-size:15px;color:#444444;font-weight:400;letter-spacing:0.656px;">Alignment</span>
<span class="t" style="left:1265.42px;top:246px;font-size:15px;color:#444444;font-weight:400;letter-spacing:-0.209px;">Table Size</span>
<span class="t" style="left:56.52px;top:287px;font-size:17.7px;color:#242424;font-weight:400;letter-spacing:0.039px;">From Beginning</span>
<span class="t" style="left:237.92px;top:287px;font-size:17.7px;color:#242424;font-weight:400;letter-spacing:0.341px;">Open</span>
<span class="t" style="left:337.87px;top:287px;font-size:17.7px;color:#242424;font-weight:400;letter-spacing:-0.371px;">New</span>
<span class="t" style="left:428.89px;top:287px;font-size:17.7px;color:#242424;font-weight:400;letter-spacing:0.503px;">Undo</span>
<span class="t" style="left:543.10px;top:287px;font-size:17.7px;color:#242424;font-weight:400;letter-spacing:-0.864px;">Save</span>
<span class="t" style="left:635.52px;top:287px;font-size:17.7px;color:#b2b2b2;font-weight:400;letter-spacing:-0.411px;">Redo</span>
<span class="t" style="left:18.88px;top:345px;font-size:22px;color:#C43E1C;font-weight:400;letter-spacing:0.000px;">1</span>
<span class="t" style="left:19.47px;top:475px;font-size:22px;color:#444444;font-weight:400;letter-spacing:0.000px;">2</span>
<span class="t" style="left:403.47px;top:357px;font-size:30px;color:#000;font-weight:700;letter-spacing:0.233px;">Distribute Rows</span>
<span class="t" style="left:947.57px;top:350px;font-size:30px;color:#000;font-weight:700;letter-spacing:0.344px;">Distribute Columns</span>
<span class="t" style="left:12.81px;top:995px;font-size:15.6px;color:#444444;font-weight:400;letter-spacing:0.002px;">Slide 1 of 2</span>
<span class="t" style="left:162.98px;top:995px;font-size:15.6px;color:#444444;font-weight:400;letter-spacing:0.041px;">English (Nigeria)</span>
<span class="t" style="left:328.56px;top:995px;font-size:15.6px;color:#242424;font-weight:700;letter-spacing:0.087px;">Accessibility: Investigate</span>
<span class="t" style="left:1616.42px;top:995px;font-size:15.6px;color:#444444;font-weight:400;letter-spacing:0.227px;">60%</span>
</div>
<svg class="a" style="left:0;top:0" width="1714" height="1020" viewBox="0 0 1714 1020" fill="none">
<rect x="1189" y="78.7" width="84.1" height="41.4" rx="4" stroke="#000" stroke-width="3.8"/>
<g stroke="#000" stroke-width="4.3" stroke-linecap="butt">
<line x1="637.3" y1="361.7" x2="807.5" y2="179.6"/>
<line x1="947.2" y1="348.2" x2="851.8" y2="230.7"/>
</g>
<polygon points="819.8,166.4 798.2,178.2 806.3,180.9 809.5,188.8" fill="#000"/>
<polygon points="840.3,216.6 860.2,229.6 852.7,231.9 848.7,239.3" fill="#000"/>
</svg>

</body></html>
